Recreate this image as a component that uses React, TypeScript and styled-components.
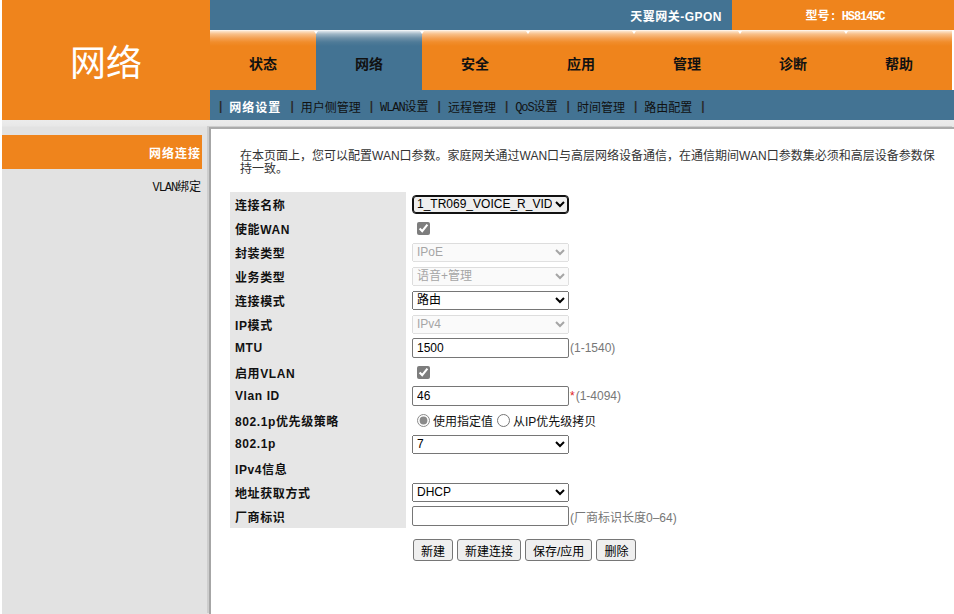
import React from 'react';
import styled, { createGlobalStyle, css } from 'styled-components';

const ORANGE = '#ef841c';
const BLUE = '#437393';
const CJK = '"Liberation Sans", "Noto Sans CJK SC", sans-serif';

const Global = createGlobalStyle`
  html, body { margin: 0; padding: 0; background: #fff; }
  body { font-family: ${CJK}; }
  * { box-sizing: border-box; }
`;

const Page = styled.div`
  width: 954px;
  min-height: 614px;
  padding-left: 2px;
  display: flex;
  flex-direction: column;
`;

const Header = styled.header`
  display: flex;
  height: 120px;
`;

const Logo = styled.div`
  width: 208px;
  background: ${ORANGE};
  color: #fff;
  display: flex;
  align-items: center;
  justify-content: center;
  font: 400 36px "Noto Sans CJK SC", sans-serif;
`;

const HeaderRight = styled.div`
  flex: 1;
  display: flex;
  flex-direction: column;
`;

const TopBar = styled.div`
  height: 30px;
  display: flex;
`;

const Brand = styled.div`
  flex: 1;
  background: ${BLUE};
  color: #fff;
  font: bold 12px ${CJK};
  letter-spacing: 0.5px;
  display: flex;
  align-items: center;
  justify-content: flex-end;
  padding-right: 10px;
`;

const Model = styled.div`
  width: 222px;
  background: ${ORANGE};
  color: #fff;
  font: bold 12px ${CJK};
  display: flex;
  align-items: center;
  justify-content: center;
  padding-left: 4px;
`;

const Mono = styled.span`
  font-family: "Liberation Mono", "DejaVu Sans Mono", monospace;
  font-size: 12px;
  letter-spacing: -1.1px;
`;

const Tabs = styled.nav`
  height: 60px;
  display: flex;
  background: #fff;
`;

const Tab = styled.div<{ $active?: boolean }>`
  position: relative;
  width: 106px;
  height: 60px;
  display: flex;
  align-items: center;
  justify-content: center;
  padding-top: 5px;
  font: bold 14px ${CJK};
  color: #111;
  background: ${(p) =>
    p.$active
      ? 'linear-gradient(to bottom, #ffffff 0px, #dfe6ec 1px, #9fb6c6 4px, #6e90a8 8px, #4f7b98 12px, #437393 16px, #437393 100%)'
      : 'linear-gradient(to bottom, #ffffff 0px, #fde6cf 1px, #f8c08a 4px, #f4a256 8px, #f18d2c 12px, #ef841c 16px, #ef841c 100%)'};
  &:not(:first-child)::before {
    content: '';
    position: absolute;
    left: -2px;
    top: 1px;
    border-left: 2px solid transparent;
    border-right: 2px solid transparent;
    border-top: 3px solid #fff;
  }
`;

const SubNav = styled.div`
  height: 30px;
  background: ${BLUE};
  display: flex;
  align-items: center;
  padding-left: 9px;
  padding-top: 2px;
  font: 12px ${CJK};
  color: #111;
`;

const Sep = styled.span`
  color: #2b2b2b;
  margin: 0 7px 0 0;
  font-weight: bold;
`;

const SubItem = styled.span<{ $active?: boolean }>`
  margin-right: 9px;
  ${(p) =>
    p.$active &&
    css`
      color: #fff;
      font-weight: bold;
      letter-spacing: 1px;
    `}
`;

const Body = styled.div`
  flex: 1;
  display: flex;
  min-height: 494px;
  background: linear-gradient(to bottom, #ececec 0px, #e8e8e8 6px, #e2e2e2 7px, #e2e2e2 100%);
`;

const Sidebar = styled.aside`
  width: 203px;
  padding-top: 15px;
  display: flex;
  flex-direction: column;
`;

const SideItem = styled.div<{ $active?: boolean }>`
  width: 200px;
  height: 34px;
  display: flex;
  align-items: center;
  justify-content: flex-end;
  padding-right: 1px;
  font-size: 12px;
  color: #111;
  ${(p) =>
    p.$active &&
    css`
      background: ${ORANGE};
      color: #fff;
      font-weight: bold;
      letter-spacing: 1px;
    `}
`;

const Content = styled.main`
  flex: 1;
  margin: 7px 0 0 4px;
  background: #fff;
  border-left: 2px solid #a6a6a6;
  border-top: 2px solid #ababab;
  box-shadow: -2px -1px 0 #cdcdcd;
  padding: 21px 0 0 19px;
`;

const Desc = styled.p`
  margin: 0 0 0 10px;
  width: 702px;
  font-size: 12px;
  line-height: 13px;
  color: #333;
`;

const Form = styled.div`
  margin-top: 16px;
  display: grid;
  grid-template-columns: 176px 1fr;
  grid-auto-rows: 24px;
`;

const Label = styled.div`
  background: #e6e6e6;
  padding-left: 5px;
  display: flex;
  align-items: center;
  font: bold 12px ${CJK};
  letter-spacing: 0.6px;
  color: #111;
`;

const Value = styled.div`
  display: flex;
  align-items: center;
  padding-left: 6px;
  font-size: 12px;
  color: #111;
`;

const Select = styled.select<{ $focused?: boolean }>`
  width: 157px;
  height: 19px;
  font: 12px ${CJK};
  ${(p) =>
    p.$focused &&
    css`
      border: 1px solid #111;
      box-shadow: inset 0 0 0 1px #111;
      border-radius: 4px;
    `}
`;

const TextInput = styled.input`
  width: 157px;
  height: 20px;
  font: 12px ${CJK};
  padding: 1px 4px;
  border: 1px solid #767676;
  border-radius: 2px;
  color: #000;
`;

const Check = styled.input`
  margin: 0 0 0 5px;
  width: 13px;
  height: 13px;
  accent-color: #7d7d7d;
`;

const Radio = styled.input<{ $gap?: boolean }>`
  margin: 0 3px 0 ${(p) => (p.$gap ? '4px' : '5px')};
  width: 13px;
  height: 13px;
  accent-color: #8a8a8a;
`;

const Hint = styled.span`
  color: #777;
  font-size: 12px;
  margin-left: 1px;
`;

const Req = styled.span`
  color: #e0201b;
  margin-left: 1px;
`;

const Buttons = styled.div`
  margin: 11px 0 0 183px;
  display: flex;
  gap: 4px;
`;

const Button = styled.button`
  height: 22px;
  padding: 1px 7px;
  font: 12px ${CJK};
  color: #000;
  background: #efefef;
  border: 1px solid #767676;
  border-radius: 3px;
`;

const tabs = ['状态', '网络', '安全', '应用', '管理', '诊断', '帮助'];
const subs: React.ReactNode[] = [
  '网络设置',
  '用户侧管理',
  <>
    <Mono>WLAN</Mono>设置
  </>,
  '远程管理',
  <>
    <Mono>QoS</Mono>设置
  </>,
  '时间管理',
  '路由配置',
];

export default function App() {
  return (
    <>
      <Global />
      <Page>
        <Header>
          <Logo>网络</Logo>
          <HeaderRight>
            <TopBar>
              <Brand>天翼网关-GPON</Brand>
              <Model>
                <span>
                  型号<Mono>: HS8145C</Mono>
                </span>
              </Model>
            </TopBar>
            <Tabs>
              {tabs.map((t) => (
                <Tab key={t} $active={t === '网络'}>
                  {t}
                </Tab>
              ))}
            </Tabs>
            <SubNav>
              {subs.map((s, i) => (
                <React.Fragment key={i}>
                  <Sep>|</Sep>
                  <SubItem $active={i === 0}>{s}</SubItem>
                </React.Fragment>
              ))}
              <Sep>|</Sep>
            </SubNav>
          </HeaderRight>
        </Header>
        <Body>
          <Sidebar>
            <SideItem $active>网络连接</SideItem>
            <SideItem>
              <span>
                <Mono>VLAN</Mono>绑定
              </span>
            </SideItem>
          </Sidebar>
          <Content>
            <Desc>
              在本页面上，您可以配置WAN口参数。家庭网关通过WAN口与高层网络设备通信，在通信期间WAN口参数集必须和高层设备参数保持一致。
            </Desc>
            <Form>
              <Label>连接名称</Label>
              <Value>
                <Select $focused defaultValue="a">
                  <option value="a">1_TR069_VOICE_R_VID_46</option>
                </Select>
              </Value>

              <Label>使能WAN</Label>
              <Value>
                <Check type="checkbox" defaultChecked />
              </Value>

              <Label>封装类型</Label>
              <Value>
                <Select disabled defaultValue="IPoE">
                  <option>IPoE</option>
                </Select>
              </Value>

              <Label>业务类型</Label>
              <Value>
                <Select disabled defaultValue="语音+管理">
                  <option>语音+管理</option>
                </Select>
              </Value>

              <Label>连接模式</Label>
              <Value>
                <Select defaultValue="路由">
                  <option>路由</option>
                  <option>桥接</option>
                </Select>
              </Value>

              <Label>IP模式</Label>
              <Value>
                <Select disabled defaultValue="IPv4">
                  <option>IPv4</option>
                </Select>
              </Value>

              <Label>MTU</Label>
              <Value>
                <TextInput type="text" defaultValue="1500" />
                <Hint>(1-1540)</Hint>
              </Value>

              <Label>启用VLAN</Label>
              <Value>
                <Check type="checkbox" defaultChecked />
              </Value>

              <Label>Vlan ID</Label>
              <Value>
                <TextInput type="text" defaultValue="46" />
                <Req>*</Req>
                <Hint>(1-4094)</Hint>
              </Value>

              <Label>802.1p优先级策略</Label>
              <Value>
                <Radio type="radio" name="prio" defaultChecked />
                <span>使用指定值</span>
                <Radio type="radio" name="prio" $gap />
                <span>从IP优先级拷贝</span>
              </Value>

              <Label>802.1p</Label>
              <Value>
                <Select defaultValue="7">
                  {['0', '1', '2', '3', '4', '5', '6', '7'].map((v) => (
                    <option key={v}>{v}</option>
                  ))}
                </Select>
              </Value>

              <Label>IPv4信息</Label>
              <Value />

              <Label>地址获取方式</Label>
              <Value>
                <Select defaultValue="DHCP">
                  <option>DHCP</option>
                  <option>Static</option>
                  <option>PPPoE</option>
                </Select>
              </Value>

              <Label>厂商标识</Label>
              <Value>
                <TextInput type="text" defaultValue="" />
                <Hint>(厂商标识长度0–64)</Hint>
              </Value>
            </Form>
            <Buttons>
              <Button>新建</Button>
              <Button>新建连接</Button>
              <Button>保存/应用</Button>
              <Button>删除</Button>
            </Buttons>
          </Content>
        </Body>
      </Page>
    </>
  );
}
